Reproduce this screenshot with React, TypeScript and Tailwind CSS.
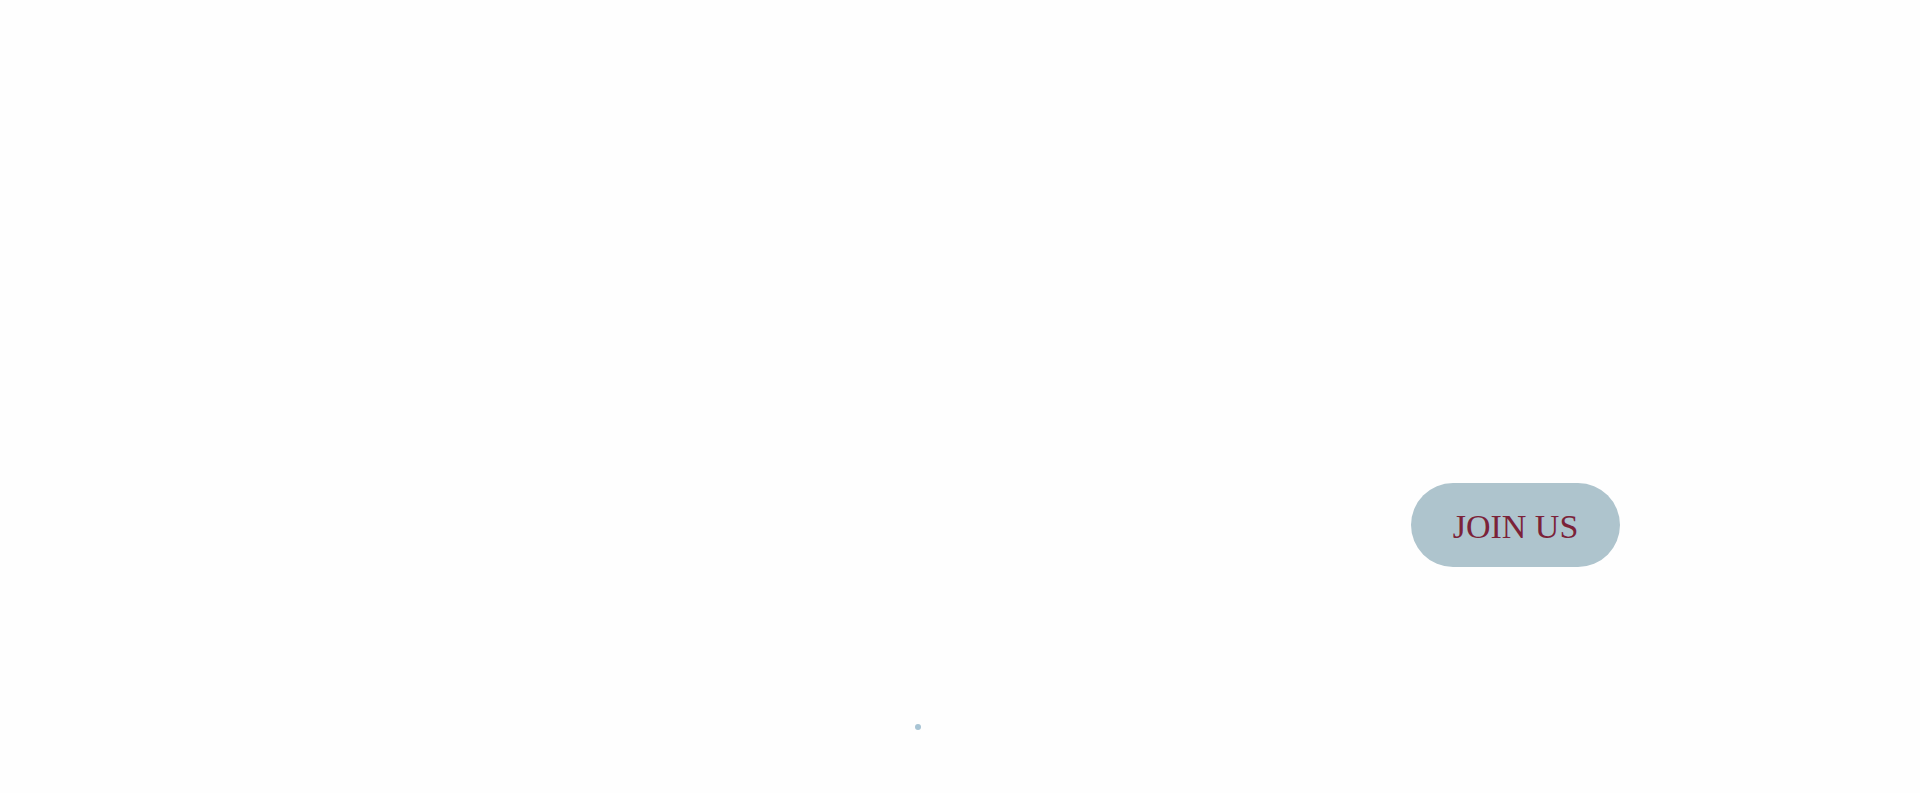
export default function App() {
  return (
    <div className="flex h-[793px] w-full flex-col bg-[#fefefe]">
      <div className="flex justify-end pt-[483px] pr-[300px]">
        <button
          className="flex h-[84px] w-[209px] items-center justify-center rounded-full bg-[#aec4cd] pt-[4px] text-[34px] leading-none text-[#7b2238]"
          style={{ fontFamily: '"Liberation Serif", serif' }}
        >
          JOIN US
        </button>
      </div>
      <div className="mt-[157px] ml-[915px] h-[6px] w-[6px] rounded-full bg-[#a8c4d4]" />
    </div>
  );
}
